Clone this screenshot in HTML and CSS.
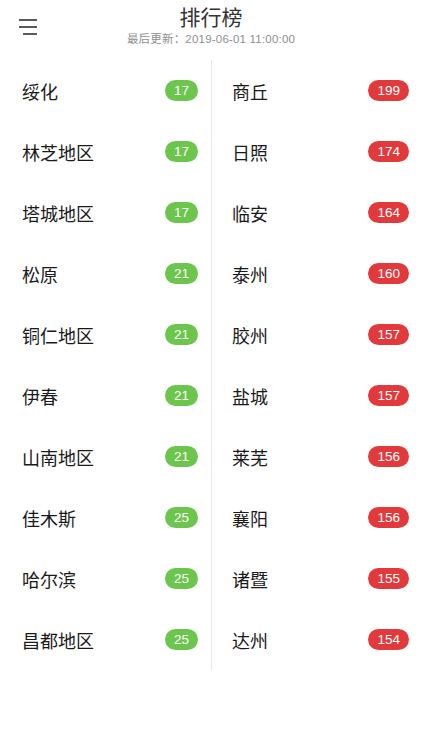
FILE: index.html
```html
<!DOCTYPE html>
<html lang="zh">
<head>
<meta charset="utf-8">
<link rel="stylesheet" href="styles.css">
</head>
<body>
<header class="header">
  <div class="menu">
    <svg width="20" height="20" viewBox="0 0 20 20">
      <path d="M0 2H18M0 9H18M4 16H18" stroke="#5a5a5a" stroke-width="2" fill="none"/>
    </svg>
  </div>
  <div class="titles">
    <div class="title">排行榜</div>
    <div class="subtitle">最后更新：2019-06-01 11:00:00</div>
  </div>
  <div></div>
</header>
<main class="board">
  <section class="col">
    <div class="row"><span class="name">绥化</span><span class="badge good">17</span></div>
    <div class="row"><span class="name">林芝地区</span><span class="badge good">17</span></div>
    <div class="row"><span class="name">塔城地区</span><span class="badge good">17</span></div>
    <div class="row"><span class="name">松原</span><span class="badge good">21</span></div>
    <div class="row"><span class="name">铜仁地区</span><span class="badge good">21</span></div>
    <div class="row"><span class="name">伊春</span><span class="badge good">21</span></div>
    <div class="row"><span class="name">山南地区</span><span class="badge good">21</span></div>
    <div class="row"><span class="name">佳木斯</span><span class="badge good">25</span></div>
    <div class="row"><span class="name">哈尔滨</span><span class="badge good">25</span></div>
    <div class="row"><span class="name">昌都地区</span><span class="badge good">25</span></div>
  </section>
  <section class="col col-right">
    <div class="row"><span class="name">商丘</span><span class="badge bad">199</span></div>
    <div class="row"><span class="name">日照</span><span class="badge bad">174</span></div>
    <div class="row"><span class="name">临安</span><span class="badge bad">164</span></div>
    <div class="row"><span class="name">泰州</span><span class="badge bad">160</span></div>
    <div class="row"><span class="name">胶州</span><span class="badge bad">157</span></div>
    <div class="row"><span class="name">盐城</span><span class="badge bad">157</span></div>
    <div class="row"><span class="name">莱芜</span><span class="badge bad">156</span></div>
    <div class="row"><span class="name">襄阳</span><span class="badge bad">156</span></div>
    <div class="row"><span class="name">诸暨</span><span class="badge bad">155</span></div>
    <div class="row"><span class="name">达州</span><span class="badge bad">154</span></div>
  </section>
</main>
</body>
</html>
```
FILE: styles.css
```css
* { box-sizing: border-box; }
html, body {
  margin: 0;
  padding: 0;
  background: #ffffff;
  font-family: "Liberation Sans", "Noto Sans CJK SC", sans-serif;
  color: #1a1a1a;
}
.header {
  height: 60px;
  display: grid;
  grid-template-columns: 1fr auto 1fr;
}
.menu {
  padding-left: 19px;
  padding-top: 18px;
}
.menu svg { display: block; }
.titles {
  padding-top: 5px;
  text-align: center;
}
.title {
  font-size: 21px;
  line-height: 26px;
  color: #333333;
}
.subtitle {
  margin-top: 1px;
  font-size: 11.5px;
  line-height: 14px;
  letter-spacing: 0.2px;
  color: #8e8e8e;
}
.board {
  display: grid;
  grid-template-columns: 211px 211px;
}
.col {
  display: flex;
  flex-direction: column;
  padding: 0 13px 0 22px;
}
.col-right {
  border-left: 1px solid #e6e6e6;
  padding-left: 20px;
}
.row {
  height: 61px;
  display: flex;
  align-items: center;
  justify-content: space-between;
}
.name {
  font-size: 18px;
  color: #1a1a1a;
}
.badge {
  height: 21px;
  line-height: 21px;
  padding: 0 9px;
  border-radius: 11px;
  font-size: 13.5px;
  color: #ffffff;
}
.good { background: #6cc64e; }
.bad { background: #e23a3c; }
```
